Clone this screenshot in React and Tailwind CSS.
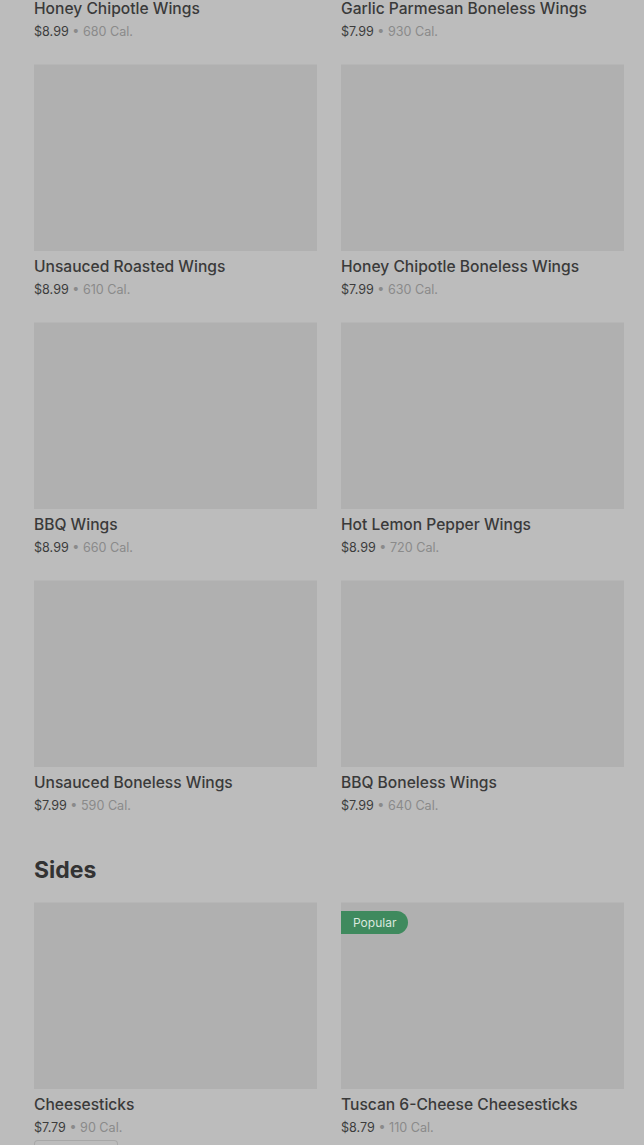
import React from "react";

const wingRows = [
  [
    { name: "Unsauced Roasted Wings", price: "$8.99", cal: "610 Cal." },
    { name: "Honey Chipotle Boneless Wings", price: "$7.99", cal: "630 Cal." },
  ],
  [
    { name: "BBQ Wings", price: "$8.99", cal: "660 Cal." },
    { name: "Hot Lemon Pepper Wings", price: "$8.99", cal: "720 Cal." },
  ],
  [
    { name: "Unsauced Boneless Wings", price: "$7.99", cal: "590 Cal." },
    { name: "BBQ Boneless Wings", price: "$7.99", cal: "640 Cal." },
  ],
];

function Info({ item }) {
  return (
    <div>
      <div className="text-[15.6px] leading-[24px] font-medium text-[#3a3a3a] whitespace-nowrap">{item.name}</div>
      <div className="mt-[1px] text-[12.6px] leading-[20px] whitespace-nowrap">
        <span className="text-[#3c3c3c]">{item.price}</span>
        <span className="text-[#8a8a8a]"> • {item.cal}</span>
      </div>
    </div>
  );
}

function Card({ item, badge }) {
  return (
    <div>
      <div className="relative h-[187px] bg-[#b0b0b0] border-t border-[#b6b6b6]">
        {badge && (
          <div className="absolute left-0 top-[8px] h-[23px] px-[12px] flex items-center rounded-r-full bg-[#3f8a5e] text-[12px] text-[#dbe8df]">
            {badge}
          </div>
        )}
      </div>
      <div className="pt-[4px]">
        <Info item={item} />
      </div>
    </div>
  );
}

export default function App() {
  return (
    <div
      className="h-[1145px] overflow-hidden bg-[#bcbcbc] pl-[34px] pr-[20px]"
      style={{ fontFamily: "Inter, 'Noto Sans', sans-serif" }}
    >
      <div className="grid grid-cols-2 gap-x-[24px] -mt-[3px]">
        <Info item={{ name: "Honey Chipotle Wings", price: "$8.99", cal: "680 Cal." }} />
        <Info item={{ name: "Garlic Parmesan Boneless Wings", price: "$7.99", cal: "930 Cal." }} />
      </div>
      <div className="grid grid-cols-2 gap-x-[24px] gap-y-[22px] mt-[22px]">
        {wingRows.flat().map((it) => (
          <Card key={it.name} item={it} />
        ))}
      </div>
      <h2 className="mt-[38px] text-[23px] leading-[32px] font-bold text-[#333333]">Sides</h2>
      <div className="grid grid-cols-2 gap-x-[24px] mt-[16px]">
        <div>
          <Card item={{ name: "Cheesesticks", price: "$7.79", cal: "90 Cal." }} />
          <div className="mt-[2px] w-[84px] h-[8px] rounded-t-[4px] border-t border-x border-[#a8a8a8]"></div>
        </div>
        <Card item={{ name: "Tuscan 6-Cheese Cheesesticks", price: "$8.79", cal: "110 Cal." }} badge="Popular" />
      </div>
    </div>
  );
}
